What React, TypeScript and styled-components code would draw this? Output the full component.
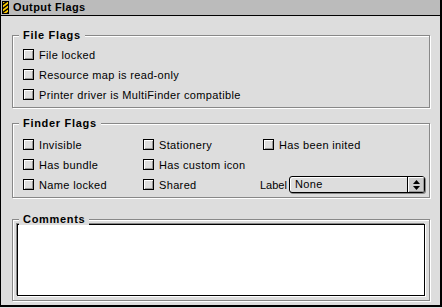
import React from "react";
import styled, { createGlobalStyle } from "styled-components";

const GlobalStyle = createGlobalStyle`
  html, body {
    margin: 0;
    padding: 0;
    background: #dddddd;
  }
  body {
    font-family: "Liberation Sans", Arial, sans-serif;
    font-size: 11px;
    color: #000;
  }
  * { box-sizing: border-box; }
`;

const Window = styled.div`
  width: 442px;
  display: flex;
  flex-direction: column;
  border-left: 1px solid #000;
  border-right: 2px solid #000;
  border-bottom: 2px solid #000;
  background: #dddddd;
`;

const TitleBar = styled.div`
  height: 16px;
  display: flex;
  align-items: center;
  gap: 4px;
  padding-left: 1px;
  background: #bbbbbb;
  border-bottom: 1px solid #000;
`;

const Title = styled.span`
  font-weight: bold;
  font-size: 11px;
  letter-spacing: 0.4px;
  line-height: 15px;
`;

const Body = styled.div`
  display: flex;
  flex-direction: column;
  padding: 19px 10px 4px 11px;
`;

const Group = styled.div<{ $mt: number; $pad: string }>`
  position: relative;
  margin-top: ${(p) => p.$mt}px;
  padding: ${(p) => p.$pad};
  border: 1px solid #888888;
  box-shadow: inset 1px 1px 0 #ffffff, 1px 1px 0 #ffffff;
`;

const GroupTitle = styled.span`
  position: absolute;
  top: -7px;
  left: 6px;
  padding: 0 4px;
  background: #dddddd;
  font-weight: bold;
  font-size: 11px;
  letter-spacing: 0.7px;
  line-height: 12px;
`;

const Rows = styled.div`
  display: flex;
  flex-direction: column;
  gap: 1px;
`;

const FlagGrid = styled.div`
  display: grid;
  grid-template-columns: 120px 120px 1fr;
  grid-auto-rows: 19px;
  row-gap: 1px;
`;

const CheckRow = styled.label`
  height: 19px;
  display: flex;
  align-items: center;
  gap: 5px;
  white-space: nowrap;
  letter-spacing: 0.35px;
`;

const Box = styled.span`
  width: 11px;
  height: 11px;
  flex: none;
  border: 1px solid #000;
  background: #dddddd;
  box-shadow: inset 1px 1px 0 #ffffff, inset -1px -1px 0 #999999;
`;

const LabelRow = styled.div`
  display: flex;
  align-items: center;
  gap: 2px;
  margin-left: -3px;
`;

const Popup = styled.div`
  flex: 1;
  height: 17px;
  display: flex;
  align-items: stretch;
  border: 1px solid #000;
  border-radius: 3px;
  background: #dddddd;
  box-shadow: inset 1px 1px 0 #ffffff, 1px 1px 0 #888888;
  overflow: hidden;
`;

const PopupText = styled.span`
  flex: 1;
  padding-left: 5px;
  line-height: 15px;
  letter-spacing: 0.35px;
`;

const PopupArrow = styled.span`
  width: 17px;
  display: flex;
  align-items: center;
  justify-content: center;
  border-left: 1px solid #000;
  background: #cccccc;
  box-shadow: inset 1px 1px 0 #ffffff, inset -1px -1px 0 #999999;
`;

const TextBox = styled.div`
  height: 72px;
  border: 1px solid #000;
  background: #ffffff;
  box-shadow: -1px -1px 0 #888888, 1px 1px 0 #ffffff;
`;

const Check = ({ children }: { children: React.ReactNode }) => (
  <CheckRow>
    <Box />
    <span>{children}</span>
  </CheckRow>
);

const StripeIcon = () => (
  <svg width="7" height="13" viewBox="0 0 7 13">
    <defs>
      <clipPath id="c">
        <rect x="1" y="1" width="5" height="11" />
      </clipPath>
    </defs>
    <rect x="0.5" y="0.5" width="6" height="12" fill="#ffcc00" stroke="#000" />
    <g clipPath="url(#c)" stroke="#000" strokeWidth="1.4">
      <line x1="0" y1="4" x2="7" y2="-1" />
      <line x1="0" y1="8" x2="7" y2="3" />
      <line x1="0" y1="12" x2="7" y2="7" />
      <line x1="0" y1="16" x2="7" y2="11" />
    </g>
  </svg>
);

const UpDown = () => (
  <svg width="7" height="10" viewBox="0 0 7 10">
    <path d="M3.5 0 L7 4 L0 4 Z" fill="#000" />
    <path d="M0 6 L7 6 L3.5 10 Z" fill="#000" />
  </svg>
);

export default function App() {
  return (
    <>
      <GlobalStyle />
      <Window>
        <TitleBar>
          <StripeIcon />
          <Title>Output Flags</Title>
        </TitleBar>
        <Body>
          <Group $mt={0} $pad="9px 4px 3px 10px">
            <GroupTitle>File Flags</GroupTitle>
            <Rows>
              <Check>File locked</Check>
              <Check>Resource map is read-only</Check>
              <Check>Printer driver is MultiFinder compatible</Check>
            </Rows>
          </Group>
          <Group $mt={15} $pad="11px 4px 3px 10px">
            <GroupTitle>Finder Flags</GroupTitle>
            <FlagGrid>
              <Check>Invisible</Check>
              <Check>Stationery</Check>
              <Check>Has been inited</Check>
              <Check>Has bundle</Check>
              <Check>Has custom icon</Check>
              <span />
              <Check>Name locked</Check>
              <Check>Shared</Check>
              <LabelRow>
                <span>Label</span>
                <Popup>
                  <PopupText>None</PopupText>
                  <PopupArrow>
                    <UpDown />
                  </PopupArrow>
                </Popup>
              </LabelRow>
            </FlagGrid>
          </Group>
          <Group $mt={21} $pad="4px 4px 4px 4px">
            <GroupTitle>Comments</GroupTitle>
            <TextBox />
          </Group>
        </Body>
      </Window>
    </>
  );
}
